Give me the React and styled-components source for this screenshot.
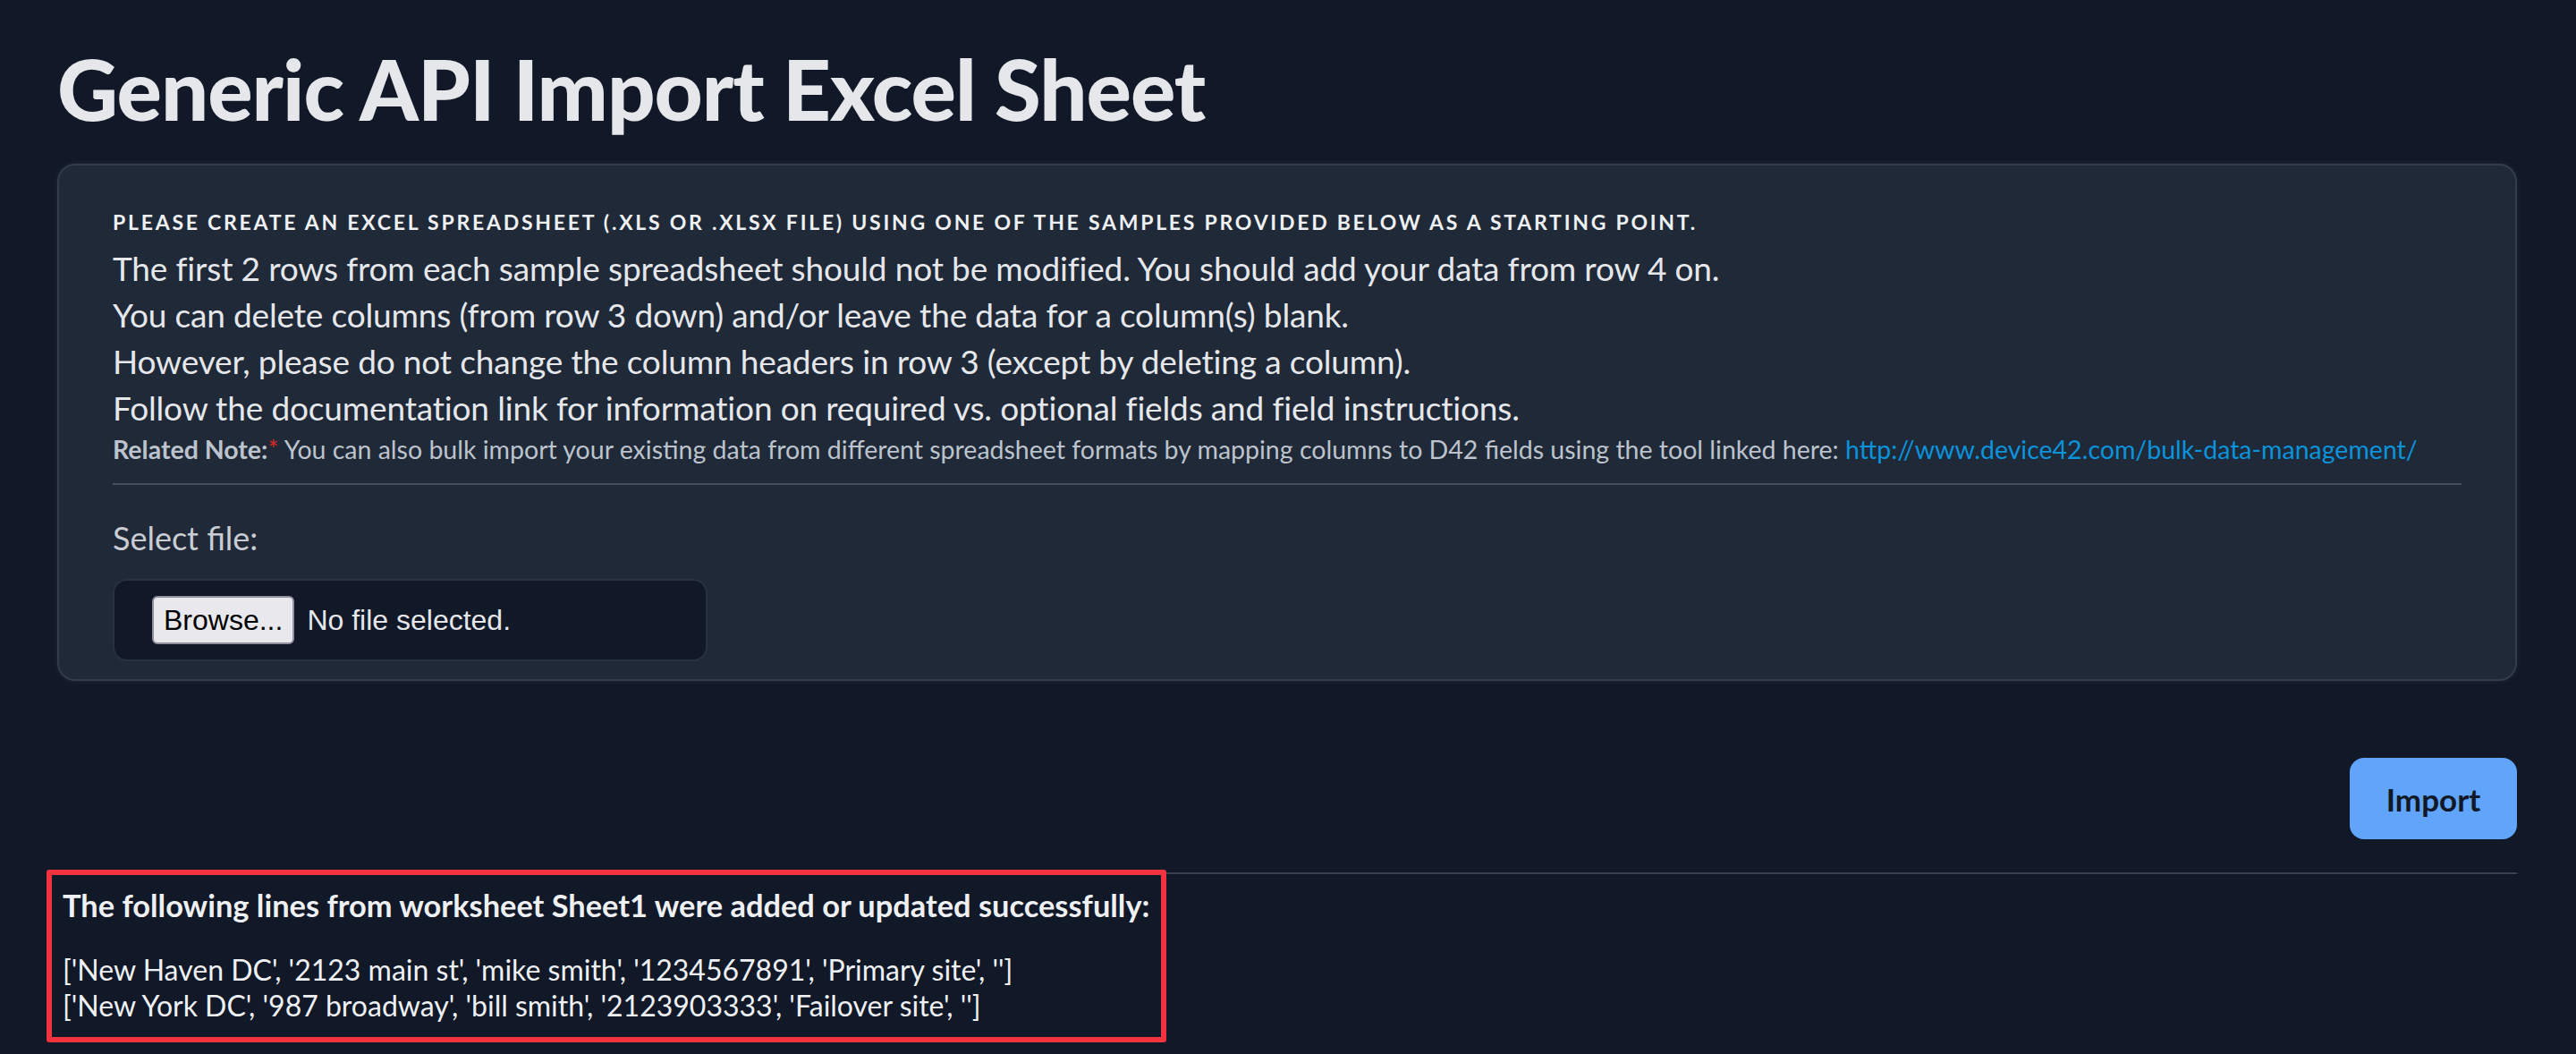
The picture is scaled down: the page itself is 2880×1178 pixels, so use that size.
import React from "react";
import styled, { createGlobalStyle } from "styled-components";

const GlobalStyle = createGlobalStyle`
  html, body {
    margin: 0;
    padding: 0;
    background-color: #111827;
  }
  body {
    font-family: Lato, "Open Sans", sans-serif;
    color: #e5e7eb;
  }
`;

const Page = styled.div`
  display: flex;
  flex-direction: column;
  padding: 0 66px 0 64px;
  min-height: 1178px;
  box-sizing: border-box;
`;

const Title = styled.h1`
  margin: 52px 0 37px;
  font-size: 94px;
  line-height: 1;
  font-weight: 900;
  letter-spacing: -1px;
  color: #e5e7eb;
`;

const Panel = styled.section`
  display: flex;
  flex-direction: column;
  padding: 47px 60px 20px;
  background-color: #1f2937;
  border: 2px solid #323c4c;
  border-radius: 20px;
  box-shadow: 0 0 6px rgba(148, 163, 184, 0.12);
`;

const Heading = styled.h4`
  margin: 0 0 9px;
  font-size: 23px;
  line-height: 33px;
  font-weight: 700;
  letter-spacing: 2.75px;
  text-transform: uppercase;
  color: #eef0f3;
`;

const Instructions = styled.div`
  display: flex;
  flex-direction: column;
  font-size: 37px;
  line-height: 52px;
  letter-spacing: -0.16px;
  color: #e5e7eb;
`;

const Note = styled.p`
  margin: 0;
  font-size: 28.5px;
  line-height: 40px;
  color: #bcc3cd;

  strong {
    font-weight: 700;
  }
`;

const Required = styled.span`
  color: #dc2626;
`;

const Link = styled.a`
  color: #0b93dc;
  text-decoration: none;
`;

const Rule = styled.hr`
  margin: ${(p) => p.$margin || "0"};
  border: 0;
  height: 2px;
  background-color: ${(p) => p.$color || "#465060"};
`;

const Label = styled.label`
  font-size: 36px;
  line-height: 52px;
  color: #c9cdd3;
  margin-bottom: 20px;
`;

const FileBox = styled.div`
  display: flex;
  align-items: center;
  gap: 14px;
  width: 665px;
  height: 92px;
  box-sizing: border-box;
  padding: 0 42px;
  background-color: #111827;
  border: 2px solid #283242;
  border-radius: 16px;
`;

const BrowseButton = styled.button`
  height: 54px;
  padding: 0 11px;
  font-family: "Liberation Sans", Arial, sans-serif;
  font-size: 32px;
  color: #000;
  background-color: #e9e9ed;
  border: 2px solid #8f8f9d;
  border-radius: 6px;
`;

const FileName = styled.span`
  font-family: "Liberation Sans", Arial, sans-serif;
  font-size: 32px;
  color: #e5e7eb;
`;

const Actions = styled.div`
  display: flex;
  justify-content: flex-end;
  margin: 86px 0 37px;
`;

const ImportButton = styled.button`
  width: 187px;
  height: 91px;
  font-family: Lato, sans-serif;
  font-size: 35px;
  font-weight: 700;
  color: #111827;
  background-color: #60a5fa;
  border: 0;
  border-radius: 16px;
`;

const ResultBox = styled.div`
  width: 1252px;
  box-sizing: border-box;
  margin: -5px 0 0 -12px;
  padding: 10px 6px 15px 12px;
  border: 6px solid #f2323f;
  border-radius: 3px;
`;

const ResultTitle = styled.p`
  margin: 0 0 28px;
  font-size: 34.4px;
  line-height: 48px;
  font-weight: 700;
  white-space: nowrap;
  color: #eef0f3;
`;

const ResultLine = styled.div`
  font-size: 32px;
  line-height: 40px;
  white-space: nowrap;
  color: #eef0f3;
`;

const instructions = [
  "The first 2 rows from each sample spreadsheet should not be modified. You should add your data from row 4 on.",
  "You can delete columns (from row 3 down) and/or leave the data for a column(s) blank.",
  "However, please do not change the column headers in row 3 (except by deleting a column).",
  "Follow the documentation link for information on required vs. optional fields and field instructions.",
];

const results = [
  "['New Haven DC', '2123 main st', 'mike smith', '1234567891', 'Primary site', '']",
  "['New York DC', '987 broadway', 'bill smith', '2123903333', 'Failover site', '']",
];

export default function App() {
  return (
    <>
      <GlobalStyle />
      <Page>
        <Title>Generic API Import Excel Sheet</Title>
        <Panel>
          <Heading>
            Please create an Excel spreadsheet (.xls or .xlsx file) using one of the samples provided below as a starting point.
          </Heading>
          <Instructions>
            {instructions.map((line) => (
              <span key={line}>{line}</span>
            ))}
          </Instructions>
          <Note>
            <strong>Related Note:</strong>
            <Required>*</Required> You can also bulk import your existing data from different spreadsheet
            formats by mapping columns to D42 fields using the tool linked here:{" "}
            <Link href="#">http://www.device42.com/bulk-data-management/</Link>
          </Note>
          <Rule $margin="18px 0 33px" />
          <Label>Select file:</Label>
          <FileBox>
            <BrowseButton type="button">Browse...</BrowseButton>
            <FileName>No file selected.</FileName>
          </FileBox>
        </Panel>
        <Actions>
          <ImportButton type="button">Import</ImportButton>
        </Actions>
        <Rule $color="#3a4250" />
        <ResultBox>
          <ResultTitle>The following lines from worksheet Sheet1 were added or updated successfully:</ResultTitle>
          {results.map((line) => (
            <ResultLine key={line}>{line}</ResultLine>
          ))}
        </ResultBox>
      </Page>
    </>
  );
}
